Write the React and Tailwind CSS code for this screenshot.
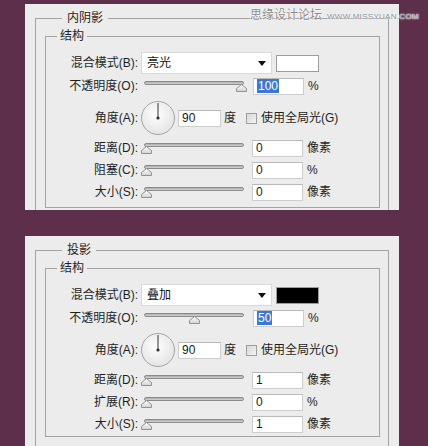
import React from 'react';

const Thumb = ({ left }) => (
  <svg className="absolute top-[3px]" style={{ left }} width="11" height="8" viewBox="0 0 11 8">
    <defs>
      <linearGradient id="thumbFill" x1="0" y1="0" x2="0" y2="1">
        <stop offset="0" stopColor="#ffffff" />
        <stop offset="1" stopColor="#d2d2d2" />
      </linearGradient>
    </defs>
    <path d="M5.5 0.5 L10.5 4.5 L10.5 7.5 L0.5 7.5 L0.5 4.5 Z" fill="url(#thumbFill)" stroke="#929292" />
  </svg>
);

const Slider = ({ value }) => (
  <div className="relative ml-[3px] h-[11px] w-[107px] shrink-0">
    <div className="ml-[3px] h-[4px] w-[100px] rounded-full border border-[#8c8c8c] bg-gradient-to-b from-[#a9a9a9] to-[#d6d6d6]" />
    <Thumb left={value * 0.95} />
  </div>
);

const Field = ({ children, className = '' }) => (
  <div className={`flex h-[17px] shrink-0 items-center border border-[#cdcdcd] border-t-[#b9b9b9] bg-white pl-[3px] text-[12px] text-[#1a1a1a] ${className}`}>
    {children}
  </div>
);

const Label = ({ children }) => (
  <span className="w-[92px] shrink-0 text-right text-[12px] text-[#1f1f1f]">{children}</span>
);

const Dial = () => (
  <svg className="ml-[3px] shrink-0" width="34" height="34" viewBox="0 0 34 34">
    <defs>
      <radialGradient id="dialFill" cx="0.45" cy="0.4" r="0.65">
        <stop offset="0" stopColor="#ffffff" />
        <stop offset="1" stopColor="#e2e2e2" />
      </radialGradient>
    </defs>
    <circle cx="17" cy="17" r="16.5" fill="url(#dialFill)" stroke="#a4a4a4" />
    <line x1="17" y1="17" x2="17" y2="2" stroke="#2e2e2e" strokeWidth="1" />
    <circle cx="17" cy="17" r="1.6" fill="#2e2e2e" />
  </svg>
);

function Panel({ title, mode, swatch, opacity, thirdLabel, values, bottomPad, height, className = '' }) {
  return (
    <div className={`w-[374px] overflow-hidden bg-[#ececec] px-[10px] pt-[6px] ${height} ${className}`}>
      <fieldset className="border border-[#a3a3a3] pb-[10px] pl-[9px] pr-[8px]">
        <legend className="ml-[17px] px-[5px] text-[12px] leading-[16px] text-[#1f1f1f]">{title}</legend>
        <fieldset className={`mt-[2px] border border-[#a3a3a3] pt-[8px] ${bottomPad}`}>
          <legend className="ml-[11px] px-[3px] text-[12px] leading-[16px] text-[#1f1f1f]">结构</legend>

          <div className="flex h-[22px] items-center">
            <Label>混合模式(B):</Label>
            <div className="ml-[3px] flex h-[22px] w-[131px] items-center justify-between border border-[#d9d9d9] bg-white pl-[5px] pr-[5px] text-[12px] text-[#111]">
              <span>{mode}</span>
              <svg width="8" height="5" viewBox="0 0 8 5"><path d="M0 0 H8 L4 5 Z" fill="#111" /></svg>
            </div>
            <div className={`ml-[4px] h-[17px] w-[43px] border border-[#9d9d9d] ${swatch}`} />
          </div>

          <div className="mt-[3px] flex h-[18px] items-center">
            <Label>不透明度(O):</Label>
            <Slider value={opacity} />
            <Field className="ml-[5px] w-[51px]">
              <span className="bg-[#3b78d6] px-[1px] leading-[14px] text-white">{opacity}</span>
            </Field>
            <span className="ml-[4px] text-[12px] text-[#1f1f1f]">%</span>
          </div>

          <div className="mt-[6px] flex h-[34px] items-center">
            <Label>角度(A):</Label>
            <Dial />
            <Field className="ml-[3px] w-[43px]">90</Field>
            <span className="ml-[3px] text-[12px] text-[#1f1f1f]">度</span>
            <div className="ml-[10px] h-[11px] w-[11px] shrink-0 border border-[#9f9f9f] bg-gradient-to-br from-[#d8d8d8] to-[#f4f4f4]" />
            <span className="ml-[4px] text-[12px] text-[#1f1f1f]">使用全局光(G)</span>
          </div>

          {[
            ['距离(D):', values[0], '像素'],
            [thirdLabel, values[1], '%'],
            ['大小(S):', values[2], '像素'],
          ].map(([label, val, unit]) => (
            <div key={label} className="mt-[4px] flex h-[18px] items-center">
              <Label>{label}</Label>
              <Slider value={0} />
              <Field className="ml-[4px] w-[51px]">{val}</Field>
              <span className="ml-[4px] text-[12px] text-[#1f1f1f]">{unit}</span>
            </div>
          ))}
        </fieldset>
      </fieldset>
    </div>
  );
}

export default function App() {
  return (
    <div className="relative h-[446px] w-[428px] overflow-hidden bg-[#5d2f4b] pl-[25px] pt-[4px] font-['Liberation_Sans','Noto_Sans_CJK_SC',sans-serif]">
      <Panel
        title="内阴影"
        mode="亮光"
        swatch="bg-white"
        opacity={100}
        thirdLabel="阻塞(C):"
        values={['0', '0', '0']}
        bottomPad="pb-[6px]"
        height="h-[206px]"
      />
      <Panel
        title="投影"
        mode="叠加"
        swatch="bg-black"
        opacity={50}
        thirdLabel="扩展(R):"
        values={['1', '0', '1']}
        bottomPad="pb-[3px]"
        height="h-[214px]"
        className="mt-[26px]"
      />

      {/* watermark */}
      <div className="absolute left-[250px] top-[6px] flex items-baseline gap-[5px] whitespace-nowrap text-[#8a8a8a] [text-shadow:0_0_1px_#fff,0_0_1px_#fff,0_0_2px_#fff]">
        <span className="text-[12px]">思缘设计论坛</span>
        <span className="text-[8px] tracking-[0.3px]">WWW.MISSYUAN.COM</span>
      </div>
    </div>
  );
}
